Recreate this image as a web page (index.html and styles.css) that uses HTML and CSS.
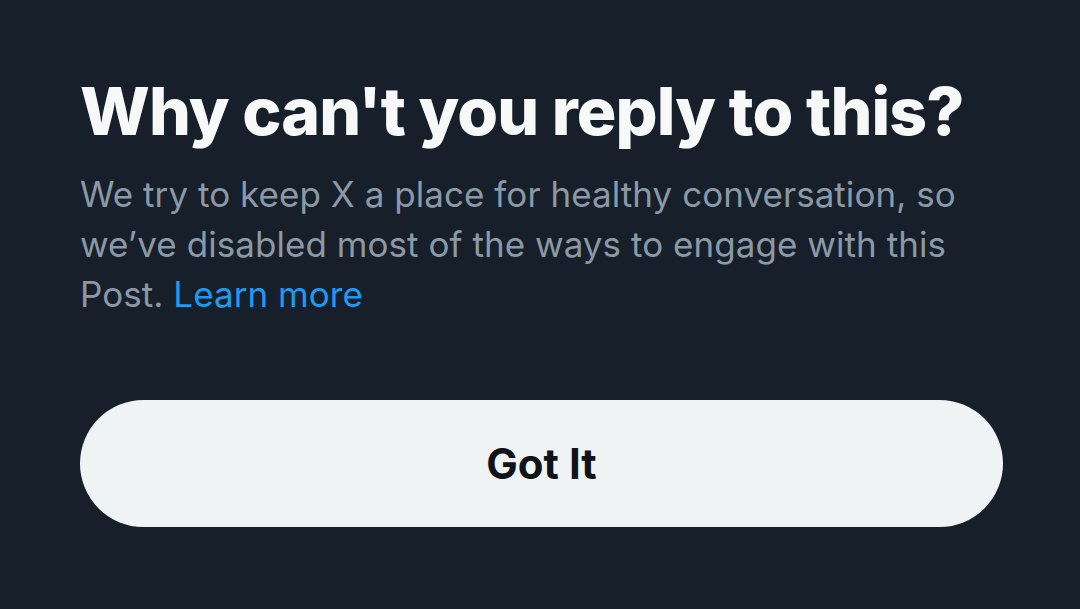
FILE: index.html
```html
<!DOCTYPE html>
<html lang="en">
<head>
    <meta charset="UTF-8">
    <meta name="viewport" content="width=device-width, initial-scale=1.0">
    <title>Why can't you reply to this?</title>
    <link rel="stylesheet" href="styles.css">
</head>
<body>
    <div class="sheet">
        <h1>Why can't you reply to this?</h1>
        <p class="description">We try to keep X a place for healthy conversation, so we’ve disabled most of the ways to engage with this Post. <a href="#">Learn more</a></p>
        <button type="button">Got It</button>
    </div>
</body>
</html>
```

FILE: styles.css
```css
* {
    box-sizing: border-box;
    margin: 0;
    padding: 0;
}

body {
    font-family: Inter, "Liberation Sans", sans-serif;
    background-color: #17202a;
    color: #f7f9f9;
    width: 1080px;
    height: 609px;
    overflow: hidden;
}

.sheet {
    padding: 71px 78px 0 80px;
}

h1 {
    font-size: 66px;
    font-weight: 800;
    line-height: 80px;
    letter-spacing: -0.9px;
    white-space: nowrap;
    color: #f7f9f9;
}

.description {
    max-width: 900px;
    margin-top: 18px;
    font-size: 35px;
    line-height: 50px;
    letter-spacing: 0.05px;
    color: #8b98a5;
}

.description a {
    color: #1d9bf0;
    text-decoration: none;
}

button {
    display: block;
    margin-top: 81px;
    width: 923px;
    height: 127px;
    border: none;
    border-radius: 64px;
    background-color: #eff3f4;
    color: #0f1419;
    font-family: Inter, "Liberation Sans", sans-serif;
    font-size: 42px;
    font-weight: 700;
    cursor: pointer;
}
```
